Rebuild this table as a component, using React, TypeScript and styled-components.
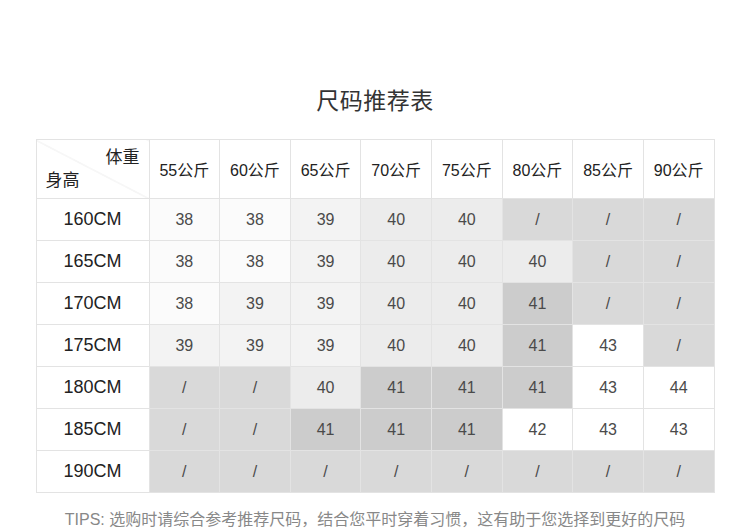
import React from "react";
import styled, { createGlobalStyle } from "styled-components";

const Global = createGlobalStyle`
  html, body { margin: 0; padding: 0; background: #fff; }
  body { font-family: "Liberation Sans", "Noto Sans CJK SC", sans-serif; }
`;

const Page = styled.div`
  width: 750px;
  display: flex;
  flex-direction: column;
  align-items: center;
  & > * { flex-shrink: 0; }
`;

const Title = styled.h1`
  margin: 86px 0 0;
  height: 53px;
  font-size: 23px;
  line-height: 30px;
  font-weight: normal;
  color: #333;
  letter-spacing: 0.5px;
`;

const Table = styled.table`
  border-collapse: collapse;
  table-layout: fixed;
  width: 679px;
`;

const Corner = styled.th`
  position: relative;
  width: 112px;
  height: 58px;
  padding: 0;
  border: 1px solid #e3e3e3;
  background: linear-gradient(
    to top right,
    transparent calc(50% - 0.6px),
    #e6e6e6 50%,
    transparent calc(50% + 0.6px)
  );
  font-weight: normal;
  font-size: 17px;
  color: #222;
`;

const CornerLabel = styled.span<{ $top?: boolean }>`
  position: absolute;
  ${(p) => (p.$top ? "top: 8px; right: 9px;" : "bottom: 7px; left: 9px;")}
  line-height: 20px;
`;

const HeadCell = styled.th`
  border: 1px solid #e3e3e3;
  padding: 0;
  height: 58px;
  font-weight: normal;
  font-size: 16px;
  color: #222;
  text-align: center;
`;

const RowHead = styled.td`
  border: 1px solid #e3e3e3;
  height: 41px;
  padding: 0;
  text-align: center;
  font-size: 18px;
  color: #222;
`;

const shade: Record<string, string> = {
  "38": "#fbfbfb",
  "39": "#f3f3f3",
  "40": "#ececec",
  "41": "#cccccc",
  "/": "#d9d9d9",
};

const Cell = styled.td<{ $v: string }>`
  border: 1px solid #e3e3e3;
  height: 41px;
  padding: 0;
  text-align: center;
  font-size: 16px;
  color: #4a4a4a;
  background: ${(p) => shade[p.$v] ?? "#ffffff"};
`;

const Tips = styled.p`
  margin: 16px 0 0;
  font-size: 16px;
  line-height: 22px;
  color: #888;
`;

const weights = ["55", "60", "65", "70", "75", "80", "85", "90"];
const rows: [string, string[]][] = [
  ["160CM", ["38", "38", "39", "40", "40", "/", "/", "/"]],
  ["165CM", ["38", "38", "39", "40", "40", "40", "/", "/"]],
  ["170CM", ["38", "39", "39", "40", "40", "41", "/", "/"]],
  ["175CM", ["39", "39", "39", "40", "40", "41", "43", "/"]],
  ["180CM", ["/", "/", "40", "41", "41", "41", "43", "44"]],
  ["185CM", ["/", "/", "41", "41", "41", "42", "43", "43"]],
  ["190CM", ["/", "/", "/", "/", "/", "/", "/", "/"]],
];

export default function App() {
  return (
    <Page>
      <Global />
      <Title>尺码推荐表</Title>
      <Table>
        <thead>
          <tr>
            <Corner>
              <CornerLabel $top>体重</CornerLabel>
              <CornerLabel>身高</CornerLabel>
            </Corner>
            {weights.map((w) => (
              <HeadCell key={w}>{w}公斤</HeadCell>
            ))}
          </tr>
        </thead>
        <tbody>
          {rows.map(([h, vals]) => (
            <tr key={h}>
              <RowHead>{h}</RowHead>
              {vals.map((v, i) => (
                <Cell key={i} $v={v}>
                  {v}
                </Cell>
              ))}
            </tr>
          ))}
        </tbody>
      </Table>
      <Tips>TIPS: 选购时请综合参考推荐尺码，结合您平时穿着习惯，这有助于您选择到更好的尺码</Tips>
    </Page>
  );
}
